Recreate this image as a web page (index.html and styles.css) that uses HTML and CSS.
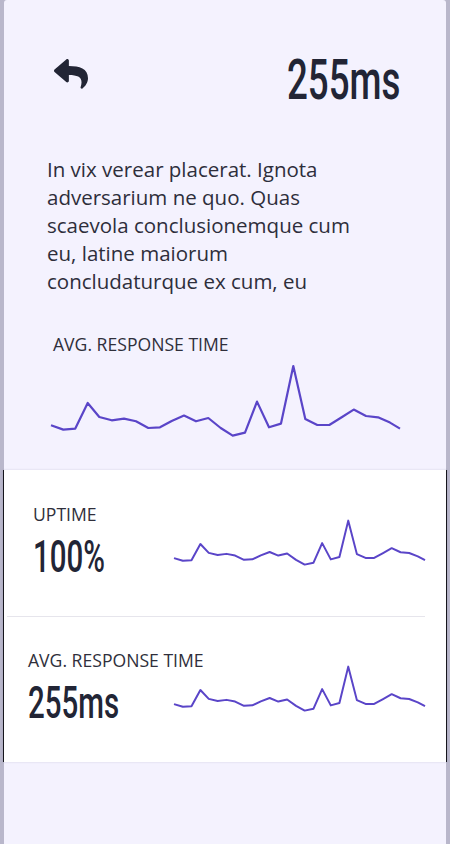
FILE: index.html
```html
<!DOCTYPE html>
<html lang="en">
<head>
<meta charset="utf-8">
<title>Status</title>
<link rel="stylesheet" href="styles.css">
</head>
<body>
<div class="panel">
  <section class="top">
    <header class="header">
      <svg class="back" viewBox="0 32 512 448" aria-hidden="true"><path d="M8.309 189.836L184.313 37.851C199.719 24.546 224 35.347 224 56.015v80.053c160.629 1.839 288 34.032 288 186.258 0 61.441-39.581 122.309-83.333 154.132-13.653 9.931-33.111-2.533-28.077-18.631 45.344-145.012-21.507-183.51-176.59-185.742V360c0 20.7-24.3 31.453-39.687 18.164l-176.004-152c-11.071-9.562-11.086-26.753 0-36.328z"/></svg>
      <div class="big"><span class="num num-right">255ms</span></div>
    </header>
    <p class="intro">In vix verear placerat. Ignota adversarium ne quo. Quas scaevola conclusionemque cum eu, latine maiorum concludaturque ex cum, eu</p>
    <div class="label label-top">Avg. response time</div>
    <svg class="spark spark-lg" viewBox="0 0 349 72" preserveAspectRatio="none"><polyline points="0,60.3 12.3,64.6 24.3,63.6 36.7,38 48.3,52 60.7,55.3 73,53.6 85,56.3 97.3,63 109,62.3 120.7,56 133,50.6 145,56.3 157.3,53 169.7,63 181.7,70.6 194,67.6 206,36.6 218,62.3 230,58.6 242.3,1 254.3,54 266.3,60 278.3,60 290.7,52.3 302.7,44.6 315,51 327,52.3 339,57.6 349,63.6"/></svg>
  </section>
  <section class="cards">
    <div class="row row-1">
      <div class="stat">
        <div class="label">Uptime</div>
        <div class="value"><span class="num">100%</span></div>
      </div>
      <svg class="spark spark-sm" viewBox="0 0 349 72" preserveAspectRatio="none"><polyline points="0,60.3 12.3,64.6 24.3,63.6 36.7,38 48.3,52 60.7,55.3 73,53.6 85,56.3 97.3,63 109,62.3 120.7,56 133,50.6 145,56.3 157.3,53 169.7,63 181.7,70.6 194,67.6 206,36.6 218,62.3 230,58.6 242.3,1 254.3,54 266.3,60 278.3,60 290.7,52.3 302.7,44.6 315,51 327,52.3 339,57.6 349,63.6"/></svg>
    </div>
    <div class="divider"></div>
    <div class="row row-2">
      <div class="stat">
        <div class="label">Avg. response time</div>
        <div class="value"><span class="num">255ms</span></div>
      </div>
      <svg class="spark spark-sm" viewBox="0 0 349 72" preserveAspectRatio="none"><polyline points="0,60.3 12.3,64.6 24.3,63.6 36.7,38 48.3,52 60.7,55.3 73,53.6 85,56.3 97.3,63 109,62.3 120.7,56 133,50.6 145,56.3 157.3,53 169.7,63 181.7,70.6 194,67.6 206,36.6 218,62.3 230,58.6 242.3,1 254.3,54 266.3,60 278.3,60 290.7,52.3 302.7,44.6 315,51 327,52.3 339,57.6 349,63.6"/></svg>
    </div>
  </section>
</div>
</body>
</html>
```

FILE: styles.css
```css
* { box-sizing: border-box; }
html, body { margin: 0; padding: 0; }
body {
  background: #b9b7cb;
  font-family: "Open Sans", "Noto Sans", sans-serif;
  color: #2d2d3a;
  overflow: hidden;
}
.panel {
  margin: 0 4px;
  height: 844px;
  background: #f4f2fe;
  border-radius: 3px 3px 0 0;
}
.top {
  padding: 58px 0 33px 43px;
}
.header {
  display: flex;
  justify-content: space-between;
  align-items: flex-start;
  padding: 0 45.5px 0 7px;
}
.back {
  width: 34px;
  height: 29.75px;
  margin-top: 1px;
  fill: #222535;
}
.big {
  font-size: 54.8px;
  line-height: 40px;
  height: 40px;
}
.num {
  display: inline-block;
  font-family: Roboto, "Liberation Sans", sans-serif;
  font-weight: 500;
  color: #222535;
  transform: scaleX(0.67);
  transform-origin: left center;
  white-space: nowrap;
}
.num-right {
  transform-origin: right center;
}
.intro {
  margin: 57px 0 0 0;
  width: 322px;
  font-size: 20.5px;
  line-height: 28px;
  color: #2e2e3b;
}
.label {
  font-size: 17.6px;
  line-height: 24px;
  text-transform: uppercase;
  color: #2f2f3b;
  white-space: nowrap;
}
.label-top {
  margin: 37px 0 0 6px;
}
.spark {
  display: block;
  overflow: visible;
}
.spark polyline {
  fill: none;
  stroke: #5a45c8;
  stroke-width: 2.2px;
  stroke-linejoin: round;
  vector-effect: non-scaling-stroke;
}
.spark-lg {
  width: 349px;
  height: 72px;
  margin: 9px 0 0 4px;
}
.cards {
  margin: 0 -1px;
  background: #ffffff;
  border-left: 1px solid #15151c;
  border-right: 1px solid #15151c;
  box-shadow: 0 0 2px rgba(60, 55, 90, 0.18);
}
.row {
  display: flex;
  align-items: flex-start;
  height: 145.5px;
  padding: 31.5px 21px 0 29px;
}
.row-2 {
  padding-left: 24px;
}
.stat {
  flex: 1 1 0;
  min-width: 0;
}
.value {
  margin-top: 13px;
  font-size: 44px;
  line-height: 32px;
  height: 32px;
}
.spark-sm {
  flex: none;
  width: 251px;
  height: 45.5px;
  margin-top: 18px;
}
.spark-sm polyline {
  stroke-width: 2px;
}
.divider {
  height: 1px;
  margin: 0 21px 0 3px;
  background: #e6e5ec;
}
```
